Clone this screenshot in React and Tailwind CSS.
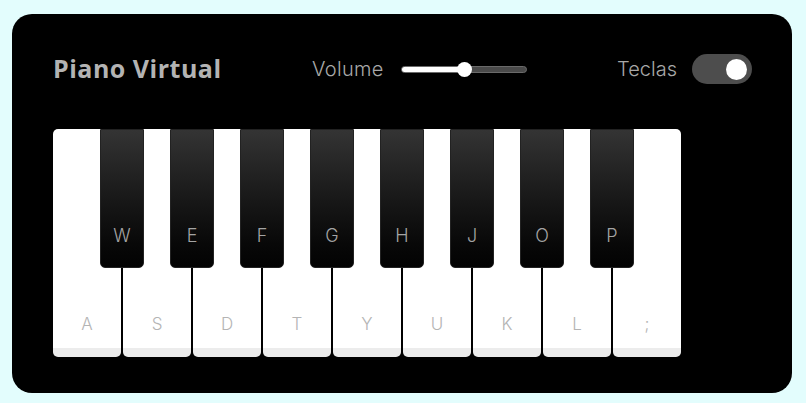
const whites = ['A', 'S', 'D', 'T', 'Y', 'U', 'K', 'L', ';'];
const blacks = ['W', 'E', 'F', 'G', 'H', 'J', 'O', 'P'];

function WhiteKey({ label }) {
    return (
        <div className="w-[68px] h-[228px] bg-white rounded-[5px] border-b-[9px] border-[#ececec] flex items-end justify-center pb-[15px] shrink-0">
            <span className="text-[17px] font-light text-[#b4b4b4] leading-none">{label}</span>
        </div>
    );
}

function BlackKey({ label }) {
    return (
        <div className="relative z-10 -mx-[21px] w-[44px] h-[139px] shrink-0 rounded-b-[5px] border border-[#222] bg-gradient-to-b from-[#343434] to-[#030303] flex items-end justify-center pb-[22px]">
            <span className="text-[18px] font-light text-[#a4a4a4] leading-none">{label}</span>
        </div>
    );
}

export default function App() {
    return (
        <div className="w-[806px] h-[403px] bg-[#e3fdfd] pt-[14px] pl-[12px] font-['Inter',sans-serif]">
            <div className="w-[780px] h-[379px] bg-black rounded-[20px] pl-[41px] pr-[40px] pt-[40px]">
                <div className="flex items-center justify-between h-[30px]">
                    <h1 className="text-[25px] font-bold text-[#b3b3b3] font-['Open_Sans',sans-serif] tracking-[0.5px] whitespace-nowrap">Piano Virtual</h1>
                    <div className="flex items-center gap-[17px]">
                        <span className="text-[20px] font-light text-[#a8a8a8] tracking-[0.3px]">Volume</span>
                        <div className="relative w-[126px] h-[7px] rounded-full bg-[#4a4a4a] border border-[#6a6a6a] flex items-center">
                            <div className="h-full w-[63px] bg-white rounded-full" />
                            <div className="w-[15px] h-[15px] rounded-full bg-white -ml-[8px]" />
                        </div>
                    </div>
                    <div className="flex items-center gap-[15px]">
                        <span className="text-[20px] font-light text-[#a8a8a8]">Teclas</span>
                        <div className="w-[60px] h-[30px] rounded-full bg-[#4d4d4d] flex items-center justify-end pr-[5px]">
                            <div className="w-[21px] h-[21px] rounded-full bg-white" />
                        </div>
                    </div>
                </div>
                <div className="flex items-start mt-[45px]">
                    {whites.map((w, i) => (
                        <>
                            <WhiteKey key={w} label={w} />
                            {i < blacks.length && <BlackKey key={blacks[i]} label={blacks[i]} />}
                        </>
                    ))}
                </div>
            </div>
        </div>
    );
}
